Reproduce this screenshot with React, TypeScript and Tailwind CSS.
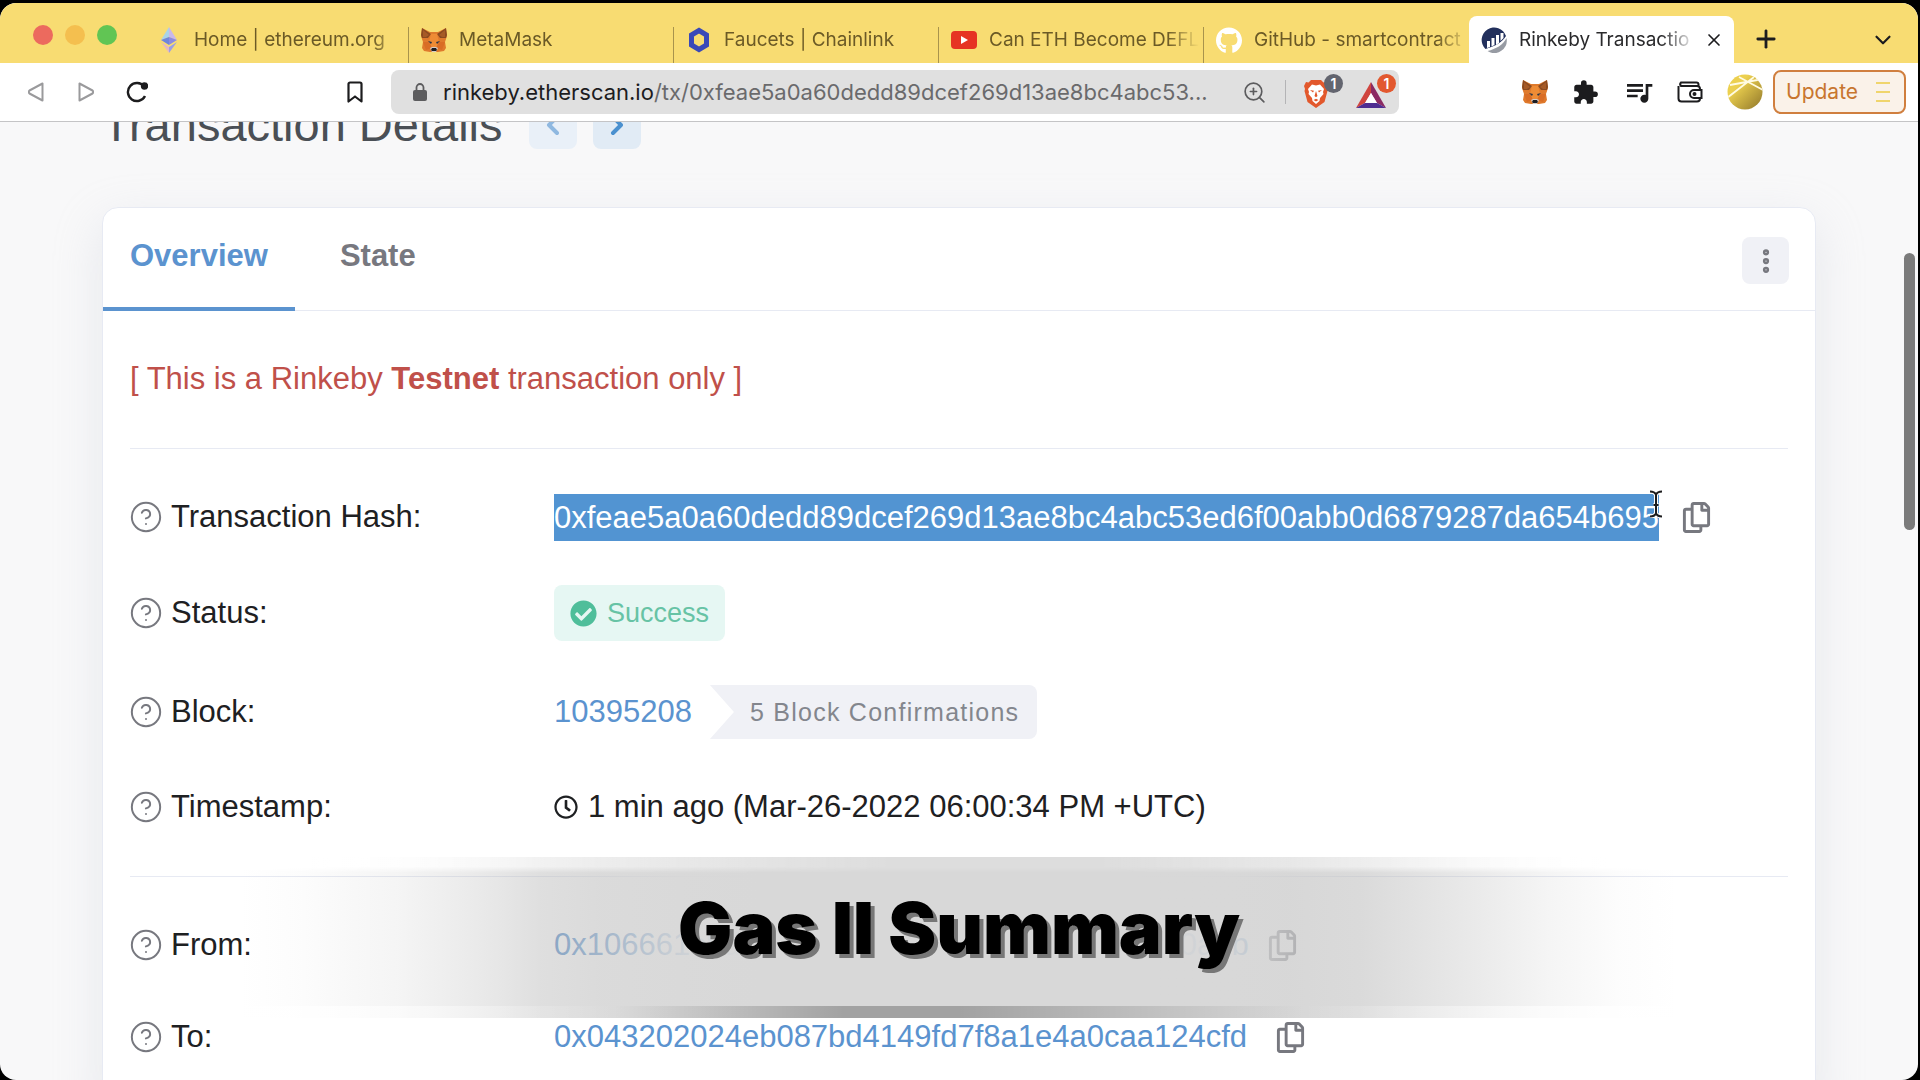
import type { ReactNode } from "react";
import { CircleHelp, X, Plus, ChevronDown, ChevronLeft, ChevronRight, ZoomIn, EllipsisVertical } from "lucide-react";
import { FaRegCopy, FaRegClock, FaCheckCircle, FaGithub } from "react-icons/fa";
import { MdExtension, MdQueueMusic } from "react-icons/md";

function FoxIcon() {
  return (
    <svg viewBox="0 0 26 24" className="h-6 w-[26px]" aria-hidden="true">
      <path d="M1 0 9 4h8l8-4 1 8-2 6 1 6-2 3-6 1H9l-6-1-2-3 1-6-2-6z" fill="#df7a2c" />
      <path d="M1 0 10 6 7 10 1 10 0 7zM25 0l-9 6 3 4 6 0 1-3z" fill="#8a4a20" />
      <path d="M2 2 8 7 5 9 2 9zM24 2l-6 5 3 2h3z" fill="#a65a26" />
      <path d="M10 6h6l2 8-3 6h-4l-3-6z" fill="#ee8c35" />
      <path d="M2 14l6 0 3 6-6 2zM24 14l-6 0-3 6 6 2z" fill="#d96d25" />
      <path d="M7 13l4 1-1 2zM19 13l-4 1 1 2z" fill="#2b3444" />
      <path d="M9 20l2 4h4l2-4-2-1h-4z" fill="#d5cbc4" />
      <path d="M11 20h4l1 2-1 1h-4l-1-1z" fill="#1d1d22" />
    </svg>
  );
}

function EthIcon() {
  return (
    <svg viewBox="0 0 18 26" className="h-[26px] w-[18px]" aria-hidden="true">
      <path d="M9 0 1 13l8-3z" fill="#a9d3e8" />
      <path d="M9 0l8 13-8-3z" fill="#c9b8ea" />
      <path d="M1 13l8-3v8z" fill="#6f86dc" />
      <path d="M17 13l-8-3v8z" fill="#8c8be0" />
      <path d="M1 15l8 5v6z" fill="#e3b8c4" />
      <path d="M17 15l-8 5v6z" fill="#9a9fe6" />
    </svg>
  );
}

function ChainlinkIcon() {
  return (
    <svg viewBox="0 0 22 26" className="h-[26px] w-[22px]" aria-hidden="true">
      <path d="M11 3.5 18.5 8v10L11 22.5 3.500 18V8z" fill="none" stroke="#3a49b8" strokeWidth="5" />
    </svg>
  );
}

function YoutubeIcon() {
  return (
    <svg viewBox="0 0 26 18" className="h-[18px] w-[26px]" aria-hidden="true">
      <rect width="26" height="18" rx="4" fill="#e63323" />
      <path d="M10 5v8l7-4z" fill="#fff" />
    </svg>
  );
}

function EtherscanIcon() {
  return (
    <svg viewBox="0 0 26 26" className="size-[26px]" aria-hidden="true">
      <path d="M4.500 22A12.500 12.500 0 1 1 25 9c-4 6-10 10-20.500 13z" fill="#22305c" />
      <path d="M6 14h3v6l-3 1zM10.500 11h3v7l-3 1.500zM15 8h3v8l-3 2zM19.500 6h3v5l-3 3z" fill="#fff" />
      <path d="M25.500 11A12.500 12.500 0 0 1 6.500 24C15 22 22 18 25.500 11z" fill="#979ba3" />
    </svg>
  );
}

function BraveIcon() {
  return (
    <svg viewBox="0 0 24 28" className="h-7 w-6" aria-hidden="true">
      <path d="M7 0h10l2.500 2.500L22 2l2 4-1 3 .5 2-3 11-8.500 6-8.500-6L.5 11 1 9 0 6l2-4 2.500.5z" fill="#e2582c" />
      <path d="M8 4.500l4 1 4-1 4 4.500-1 3 .5 2-3.500 4-.500 3-3.500 3-3.500-3-.500-3-3.500-4L5 12 4 9z" fill="#fff" />
      <path d="M6 10l4 .8-1 1.700zM18 10l-4 .8 1 1.700zM10.500 16l1.500 1.200 1.500-1.200-1.500-5zM9.500 20l2.500-1.200 2.500 1.200-2.500 1.500z" fill="#e2582c" />
    </svg>
  );
}

function BatIcon() {
  return (
    <svg viewBox="0 0 30 26" className="h-[26px] w-[30px]" aria-hidden="true">
      <path d="M15 0 0 26l9-5 6-10z" fill="#d0453f" />
      <path d="M15 0l15 26-9-5-6-10z" fill="#8b2a63" />
      <path d="M0 26h30l-9-5H9z" fill="#4f2d91" />
      <path d="M15 11l6 10H9z" fill="#fff" />
    </svg>
  );
}

function WalletIcon() {
  return (
    <svg viewBox="0 0 26 22" className="h-[22px] w-[26px]" fill="none" stroke="#1c1c1e" strokeWidth="2" aria-hidden="true">
      <path d="M1.500 5v12.500a3 3 0 0 0 3 3h15.500a3 3 0 0 0 3-3V8a3 3 0 0 0-3-3H4A2.500 2.500 0 0 1 4 1.500h15.500a2 2 0 0 1 2 2V5" />
      <path d="M24.500 9H17a4 4 0 0 0 0 8h7.500z" fill="#fff" />
      <circle cx="17.500" cy="13" r="1" fill="#1c1c1e" />
    </svg>
  );
}

function CursorIcon() {
  return (
    <svg viewBox="0 0 14 28" className="h-7 w-3.5" fill="none" aria-hidden="true">
      <path d="M1 1.500c3 0 5 1 6 3 1-2 3-3 6-3M1 26.500c3 0 5-1 6-3 1 2 3 3 6 3M7 4v20M4.500 15h5" stroke="#fff" strokeWidth="4" />
      <path d="M1 1.500c3 0 5 1 6 3 1-2 3-3 6-3M1 26.500c3 0 5-1 6-3 1 2 3 3 6 3M7 4v20M4.500 15h5" stroke="#1c1c1e" strokeWidth="2" />
    </svg>
  );
}

const tabs = [
  { title: "Home | ethereum.org", icon: <EthIcon /> },
  { title: "MetaMask", icon: <FoxIcon /> },
  { title: "Faucets | Chainlink", icon: <ChainlinkIcon /> },
  { title: "Can ETH Become DEFL", icon: <YoutubeIcon /> },
  { title: "GitHub - smartcontract", icon: <FaGithub className="size-[27px] text-white" /> },
];

function TabStrip() {
  return (
    <div className="flex h-[60px] shrink-0 items-end rounded-t-2xl bg-[#f8dc72] text-[19px] text-[#6b5a26]">
      <div className="flex h-full w-36 shrink-0 gap-3 pt-[22px] pl-[33px]">
        <button aria-label="Close window" className="size-5 rounded-full bg-[#ec6a5e]" />
        <button aria-label="Minimize window" className="size-5 rounded-full bg-[#f4bf4f]" />
        <button aria-label="Zoom window" className="size-5 rounded-full bg-[#61c554]" />
      </div>
      {tabs.map((t, i) => (
        <div key={t.title} className="flex h-[47px] min-w-0 basis-[265px] items-end">
          <button
            className={
              i < 4
                ? "flex h-9 w-full min-w-0 items-start gap-3 border-r border-[#a8934c] pl-3 pr-1"
                : "flex h-9 w-full min-w-0 items-start gap-3 pl-3"
            }
          >
            <span className="flex h-[26px] w-[26px] shrink-0 items-center justify-center">{t.icon}</span>
            <span className="min-w-0 flex-1 overflow-hidden mask-r-from-85% text-left leading-[26px] whitespace-nowrap">{t.title}</span>
          </button>
        </div>
      ))}
      <div className="flex h-[47px] min-w-0 basis-[265px] items-start rounded-t-lg bg-white pt-[11px] pr-2.5 pl-3">
        <button className="flex min-w-0 flex-1 gap-3 text-[#2a2a2c]">
          <EtherscanIcon />
          <span className="min-w-0 flex-1 overflow-hidden mask-r-from-80% text-left leading-[26px] whitespace-nowrap">Rinkeby Transactio</span>
        </button>
        <button aria-label="Close tab" className="ml-2 flex h-[26px] items-center text-[#1c1c1e]">
          <X size={20} />
        </button>
      </div>
      <button aria-label="New tab" className="mb-2.5 ml-[18px] text-[#1c1c1e]">
        <Plus size={28} strokeWidth={2.4} />
      </button>
      <button aria-label="Search tabs" className="mr-[22px] mb-2.5 ml-auto text-[#1c1c1e]">
        <ChevronDown size={26} strokeWidth={2} />
      </button>
    </div>
  );
}

function Toolbar() {
  return (
    <div className="flex h-[59px] shrink-0 items-center border-b border-[#c4c4c6] bg-white pr-3 pl-7 text-[#1c1c1e]">
      <div className="flex w-[363px] shrink-0 items-center">
        <button aria-label="Back" className="mr-[34px]">
          <svg viewBox="0 0 16 20" className="h-5 w-4" fill="none" stroke="#9a9a9c" strokeWidth="2" strokeLinejoin="round">
            <path d="M14.500 1.500v17L1.500 11.500a2 2 0 0 1 0-3z" />
          </svg>
        </button>
        <button aria-label="Forward" className="mr-8">
          <svg viewBox="0 0 16 20" className="h-5 w-4" fill="none" stroke="#9a9a9c" strokeWidth="2" strokeLinejoin="round">
            <path d="M1.500 1.500v17l13-7a2 2 0 0 0 0-3z" />
          </svg>
        </button>
        <button aria-label="Reload">
          <svg viewBox="0 0 22 22" className="size-[22px]" fill="none" stroke="#1c1c1e" strokeWidth="2.400">
            <path d="M18 5.500A9 9 0 1 0 19 15" />
            <circle cx="18.500" cy="5" r="2.500" fill="#1c1c1e" />
          </svg>
        </button>
        <button aria-label="Bookmark this page" className="mr-7 ml-auto">
          <svg viewBox="0 0 16 22" className="h-[22px] w-4" fill="none" stroke="#1c1c1e" strokeWidth="2.200" strokeLinejoin="round">
            <path d="M3 1.500h10a1.500 1.500 0 0 1 1.500 1.500v17.500L8 15.500l-6.500 5V3A1.500 1.500 0 0 1 3 1.500z" />
          </svg>
        </button>
      </div>
      <div className="flex h-11 w-[1008px] min-w-0 items-center rounded-lg bg-[#e0e0e0] pr-px pl-[22px]">
        <svg viewBox="0 0 14 18" className="h-[18px] w-3.5 shrink-0" aria-hidden="true">
          <rect y="7" width="14" height="11" rx="2" fill="#5c5c5e" />
          <path d="M3.500 8V4.500a3.500 3.500 0 0 1 7 0V8" fill="none" stroke="#5c5c5e" strokeWidth="1.800" />
        </svg>
        <a href="#url" className="ml-4 min-w-0 flex-1 truncate text-[22px] text-[#6a6a6c]">
          <span className="text-[#1c1c1e]">rinkeby.etherscan.io</span>/tx/0xfeae5a0a60dedd89dcef269d13ae8bc4abc53...
        </a>
        <button aria-label="Zoom" className="ml-3 text-[#5c5c5e]">
          <ZoomIn size={25} strokeWidth={1.600} />
        </button>
        <span className="mx-[18px] h-6 w-px bg-[#b4b4b6]" />
        <button aria-label="Brave Shields, 1 blocked" className="relative mr-3 h-9 w-10 pt-1">
          <BraveIcon />
          <span className="absolute top-0 left-5 flex size-[19px] items-center justify-center rounded-full bg-[#63656f] text-[14px] font-semibold text-white">1</span>
        </button>
        <button aria-label="Brave Rewards, 1 new" className="relative h-9 w-[42px] pt-1.5">
          <BatIcon />
          <span className="absolute top-0 left-[21px] flex size-[19px] items-center justify-center rounded-full bg-[#e2582f] text-[14px] font-semibold text-white">1</span>
        </button>
      </div>
      <div className="ml-auto flex shrink-0 items-center">
        <button aria-label="MetaMask" className="mr-6"><FoxIcon /></button>
        <button aria-label="Extensions" className="mr-6"><MdExtension size={27} /></button>
        <button aria-label="Media controls" className="mr-[22px]"><MdQueueMusic size={32} /></button>
        <button aria-label="Wallet" className="mr-6"><WalletIcon /></button>
        <button aria-label="Profile" className="mr-2.5">
          <svg viewBox="0 0 36 36" className="size-9" aria-hidden="true">
            <defs>
              <linearGradient id="avatar" x1="0" y1="0" x2="1" y2="1">
                <stop offset="0.300" stopColor="#ecd04f" />
                <stop offset="1" stopColor="#8f762a" />
              </linearGradient>
              <clipPath id="disc"><circle cx="18" cy="18" r="17.500" /></clipPath>
            </defs>
            <circle cx="18" cy="18" r="17.500" fill="url(#avatar)" />
            <path d="M0 24 27 3M12 3l26 14M3 11l33-6" stroke="#fffbe2" strokeWidth="1.800" clipPath="url(#disc)" />
          </svg>
        </button>
        <button className="flex h-11 w-[133px] items-center justify-between rounded-lg border-2 border-[#d07f3f] bg-[#faf2e9] pr-3.5 pl-[11px] text-[21px] text-[#c8762f]">
          Update
          <span className="flex w-3.5 flex-col gap-[7px]">
            <span className="h-0.5 bg-[#f0d56c]" />
            <span className="h-0.5 bg-[#f0d56c]" />
            <span className="h-0.5 bg-[#f0d56c]" />
          </span>
        </button>
      </div>
    </div>
  );
}

function Row({ label, children }: { label: string; children: ReactNode }) {
  return (
    <div className="flex items-center">
      <dt className="flex w-[424px] shrink-0 items-center gap-2 leading-[48px]">
        <CircleHelp size={34} strokeWidth={1.400} className="-ml-px text-[#77787f]" />
        {label}
      </dt>
      <dd className="flex min-w-0 items-center leading-[48px]">{children}</dd>
    </div>
  );
}

function CopyButton({ label }: { label: string }) {
  return (
    <button aria-label={label} className="text-[#77787f]">
      <FaRegCopy size={31} />
    </button>
  );
}

export default function App() {
  return (
    <div className="h-screen overflow-hidden bg-black pt-[3px] pr-0.5 font-['Inter',sans-serif]">
      <div className="relative flex h-full flex-col overflow-hidden rounded-2xl bg-[#f8f8f9]">
        <TabStrip />
        <Toolbar />
        <main className="min-h-0 flex-1 overflow-hidden px-[102px] font-['Liberation_Sans',Arial,sans-serif] text-[31px] text-[#1e2022]">
          <div className="-mt-[21px] flex h-12 items-center gap-4">
            <h1 className="mr-2.5 text-[47px] leading-[48px] text-[#4a4f55]">Transaction Details</h1>
            <button aria-label="Previous transaction" className="flex size-12 items-center justify-center rounded-lg bg-[#e9f0f8] text-[#8fb8e0]">
              <ChevronLeft size={32} strokeWidth={3} />
            </button>
            <button aria-label="Next transaction" className="flex size-12 items-center justify-center rounded-lg bg-[#e1ebf5] text-[#4a90cf]">
              <ChevronRight size={32} strokeWidth={3} />
            </button>
          </div>

          <section className="mt-[58px] rounded-2xl border border-[#e7eaf3] bg-white shadow-[0_16px_48px_rgba(189,197,209,0.300)]">
            <nav className="flex h-[103px] items-stretch border-b border-[#e7eaf3] text-[31px] font-bold">
              <button className="-mb-px border-b-4 border-[#5b93cf] px-[27px] pb-0.5 text-[#5b93cf]">Overview</button>
              <button className="px-[45px] pb-1.5 text-[#77787f]">State</button>
              <button aria-label="More options" className="mt-auto mr-[26px] mb-[26px] ml-auto flex size-[47px] items-center justify-center rounded-lg bg-[#f0f1f6] text-[#77787f]">
                <EllipsisVertical size={30} strokeWidth={3} />
              </button>
            </nav>
            <div className="px-[27px]">
              <p className="flex h-[138px] items-center border-b border-[#e7eaf3] text-[#c0504a]">
                <span>[ This is a Rinkeby <strong>Testnet</strong> transaction only ]</span>
              </p>
              <dl className="flex flex-col gap-11 border-b border-[#e7eaf3] pt-11 pb-[45px]">
                <Row label="Transaction Hash:">
                  <span className="bg-[#5294d2] leading-[47px] text-white">
                    0xfeae5a0a60dedd89dcef269d13ae8bc4abc53ed6f00abb0d6879287da654b695
                  </span>
                  <span className="relative ml-[22px] flex">
                    <CopyButton label="Copy transaction hash" />
                    <span className="absolute -top-3 -left-8"><CursorIcon /></span>
                  </span>
                </Row>
                <Row label="Status:">
                  <span className="flex h-14 items-center gap-2.5 rounded-lg bg-[#e6f7f3] px-4 text-[27px] text-[#67c3a5]">
                    <FaCheckCircle size={27} className="text-[#4fbe9a]" />
                    Success
                  </span>
                </Row>
                <Row label="Block:">
                  <a href="#block" className="text-[#5b93cf]">10395208</a>
                  <span className="ml-[18px] flex h-[54px] items-center rounded-r-lg bg-[#f0f1f6] pr-[18px] pl-10 text-[25px] tracking-wider text-[#83868d] [clip-path:polygon(0_0,100%_0,100%_100%,0_100%,24px_50%)]">
                    5 Block Confirmations
                  </span>
                </Row>
                <Row label="Timestamp:">
                  <FaRegClock size={24} className="mr-2.5" />
                  1 min ago (Mar-26-2022 06:00:34 PM +UTC)
                </Row>
              </dl>
              <dl className="flex flex-col gap-11 py-11">
                <Row label="From:">
                  <a href="#from" className="mr-[18px] text-[#5b93cf]">0x106661c8dc7532c0e4f9563c5b701c8e4f2c0a9b</a>
                  <CopyButton label="Copy sender address" />
                </Row>
                <Row label="To:">
                  <a href="#to" className="mr-7 text-[#5b93cf]">0x043202024eb087bd4149fd7f8a1e4a0caa124cfd</a>
                  <CopyButton label="Copy recipient address" />
                </Row>
              </dl>
            </div>
          </section>
        </main>

        <div className="absolute top-[250px] right-[3px] h-[277px] w-[11px] rounded-full bg-[#7b7b7b]" />

        <div className="absolute inset-x-[12.5%] bottom-[62px] flex h-[161px] items-center justify-center bg-[linear-gradient(90deg,rgba(175,175,175,0)_0%,rgba(175,175,175,0.030)_4%,rgba(175,175,175,0.130)_11%,rgba(177,177,177,0.230)_15%,rgba(181,181,181,0.330)_18%,rgba(183,183,183,0.450)_21%,rgba(199,199,199,0.650)_25%,rgba(214,214,214,0.930)_31%,rgb(216,216,216)_36%,rgb(216,216,216)_62%,rgba(213,213,213,0.930)_69%,rgba(202,202,202,0.750)_73%,rgba(188,188,188,0.550)_78%,rgba(183,183,183,0.400)_82%,rgba(180,180,180,0.280)_86%,rgba(172,172,172,0.120)_91%,rgba(172,172,172,0.030)_96%,rgba(172,172,172,0)_100%)]">
          <div className="absolute inset-x-0 top-0 h-4 bg-[linear-gradient(90deg,white_5%,rgba(255,255,255,0.600)_20%,rgba(255,255,255,0.150)_45%,rgba(255,255,255,0.150)_60%,rgba(255,255,255,0.600)_82%,white_95%)] mask-b-from-60%" />
          <div className="absolute inset-x-0 bottom-0 h-3 bg-[linear-gradient(90deg,rgba(255,255,255,0.800)_5%,rgba(255,255,255,0.200)_20%,rgba(0,0,0,0)_26%,rgba(0,0,0,0.250)_42%,rgba(0,0,0,0.250)_50%,rgba(0,0,0,0)_74%,rgba(255,255,255,0.300)_82%,rgba(255,255,255,0.800)_95%)]" />
          <p className="mb-5 text-[72px] leading-[80px] font-black whitespace-nowrap text-black [text-shadow:4px_4px_0_#777]">Gas II Summary</p>
        </div>
      </div>
    </div>
  );
}
